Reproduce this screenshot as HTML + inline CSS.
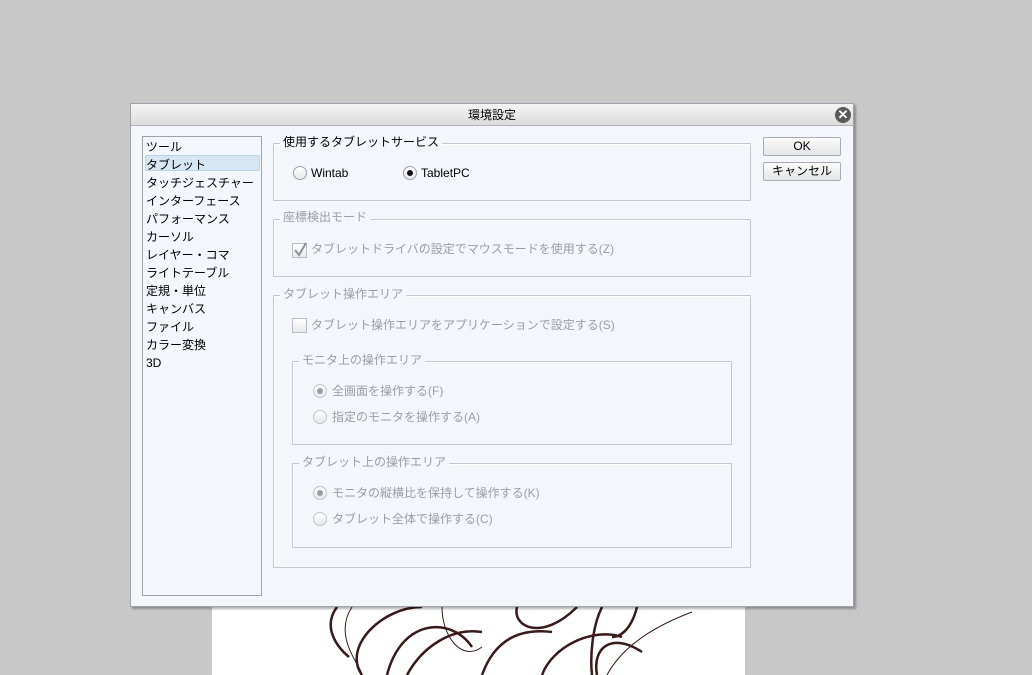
<!DOCTYPE html><html><head><meta charset="utf-8"><style>
*{margin:0;padding:0;box-sizing:border-box}
body{width:1032px;height:675px;background:#c8c8c8;position:relative;overflow:hidden;font-family:"Liberation Sans","Noto Sans CJK JP",sans-serif;font-size:12px;color:#000}
.a{position:absolute}
.t{position:absolute;line-height:14px;white-space:nowrap}
.g{position:absolute;border:1px solid #c5c8cc;box-shadow:1px 1px 0 #fff inset}
.gl{position:absolute;background:#f3f6fb;padding:0 3px;line-height:14px;white-space:nowrap}
.dis{color:#9a9ea3}
.r{position:absolute;width:14px;height:14px;border-radius:50%;border:1px solid #9ea3a8;background:linear-gradient(#fff,#e6e8eb)}
.r.on::after{content:"";position:absolute;left:3px;top:3px;width:6px;height:6px;border-radius:50%;background:#111}
.r.d{border-color:#c0c4c8}
.r.d.on::after{background:#9a9ea3}
.btn{position:absolute;width:78px;height:19px;border:1px solid #a9adb2;border-radius:2px;background:linear-gradient(#fbfbfb,#e4e5e7);text-align:center;line-height:17px}
</style></head><body>
<svg class="a" style="left:212px;top:607px" width="533" height="68">
<rect width="533" height="68" fill="#fff"/>
<g fill="none" stroke="#3a1a1a" stroke-width="2.5">
<path d="M125 0 C110 20 125 40 137 50"/>
<path d="M210 0 C170 0 130 40 150 68"/>
<path d="M260 40 C240 10 190 10 175 68"/>
<path d="M305 0 C300 20 330 35 365 0"/>
<path d="M390 0 C380 20 378 50 380 68"/>
<path d="M425 0 C420 20 410 30 400 30"/>
<path d="M270 25 C240 20 210 40 195 68"/>
<path d="M340 25 C300 20 280 40 270 68"/>
<path d="M410 30 C380 20 340 40 330 68"/>
<path d="M430 45 C400 25 380 40 385 68"/>
</g>
<g fill="none" stroke="#3a1a1a" stroke-width="1">
<path d="M140 0 C120 30 150 60 150 68"/><path d="M230 0 C230 30 250 55 270 40"/><path d="M480 5 C440 20 410 40 395 68"/>
</g></svg>
<div class="a" style="left:130px;top:103px;width:724px;height:504px;background:#f3f6fb;border:1px solid #9fa3a8;box-shadow:2px 2px 2px rgba(0,0,0,.3)">
<div class="a" style="left:0;top:0;width:722px;height:22px;background:linear-gradient(#f4f4f4,#dcdcdc);border-bottom:1px solid #b0b3b7"></div>
<div class="t" style="left:0;width:722px;text-align:center;top:4px">環境設定</div>
<div class="a" style="left:704px;top:3px;width:16px;height:16px;border-radius:50%;background:#5a5a5a;color:#fff;font-size:13px;font-weight:bold;line-height:16px;text-align:center">✕</div>
</div>
<div class="a" style="left:142px;top:136px;width:120px;height:460px;border:1px solid #9ea3a8;background:#f3f6fb"></div>
<div class="a" style="left:145px;top:155px;width:115px;height:16px;background:#d6e6f3;border:1px solid #bcd3e6;border-radius:2px"></div>
<div class="t" style="left:146px;top:138px;line-height:18px">ツール<br>タブレット<br>タッチジェスチャー<br>インターフェース<br>パフォーマンス<br>カーソル<br>レイヤー・コマ<br>ライトテーブル<br>定規・単位<br>キャンバス<br>ファイル<br>カラー変換<br>3D</div>

<div class="g" style="left:273px;top:143px;width:478px;height:58px"></div>
<div class="gl" style="left:280px;top:135px">使用するタブレットサービス</div>
<div class="r" style="left:293px;top:166px"></div><div class="t" style="left:311px;top:166px">Wintab</div>
<div class="r on" style="left:403px;top:166px"></div><div class="t" style="left:421px;top:166px">TabletPC</div>

<div class="g" style="left:273px;top:219px;width:478px;height:58px"></div>
<div class="gl dis" style="left:280px;top:210px">座標検出モード</div>
<div class="a" style="left:292px;top:243px;width:15px;height:15px;border:1px solid #b9bdc2;background:linear-gradient(#fff,#e8e9eb)"></div>
<svg class="a" style="left:292px;top:241px" width="16" height="17"><path d="M3 9 L7 14 L14 2" fill="none" stroke="#8e9296" stroke-width="2"/></svg>
<div class="t dis" style="left:311px;top:242px">タブレットドライバの設定でマウスモードを使用する(Z)</div>

<div class="g" style="left:273px;top:295px;width:478px;height:273px"></div>
<div class="gl dis" style="left:280px;top:287px">タブレット操作エリア</div>
<div class="a" style="left:292px;top:318px;width:15px;height:15px;border:1px solid #b9bdc2;background:linear-gradient(#fff,#e8e9eb)"></div>
<div class="t dis" style="left:311px;top:318px">タブレット操作エリアをアプリケーションで設定する(S)</div>

<div class="g" style="left:292px;top:361px;width:440px;height:84px"></div>
<div class="gl dis" style="left:299px;top:353px">モニタ上の操作エリア</div>
<div class="r d on" style="left:313px;top:384px"></div><div class="t dis" style="left:332px;top:384px">全画面を操作する(F)</div>
<div class="r d" style="left:313px;top:410px"></div><div class="t dis" style="left:332px;top:410px">指定のモニタを操作する(A)</div>

<div class="g" style="left:292px;top:463px;width:440px;height:85px"></div>
<div class="gl dis" style="left:299px;top:455px">タブレット上の操作エリア</div>
<div class="r d on" style="left:313px;top:486px"></div><div class="t dis" style="left:332px;top:486px">モニタの縦横比を保持して操作する(K)</div>
<div class="r d" style="left:313px;top:512px"></div><div class="t dis" style="left:332px;top:512px">タブレット全体で操作する(C)</div>

<div class="btn" style="left:763px;top:137px">OK</div>
<div class="btn" style="left:763px;top:162px">キャンセル</div>
</body></html>
